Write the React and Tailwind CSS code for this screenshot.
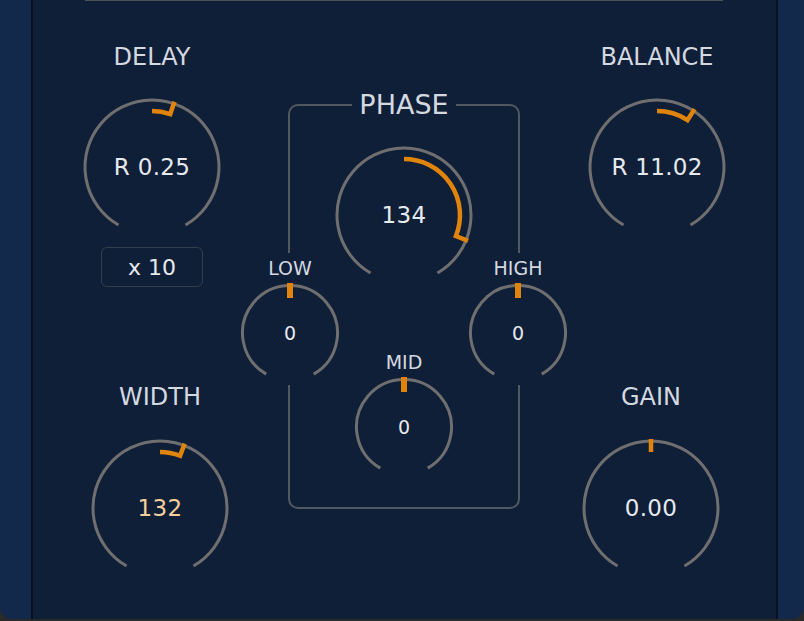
import React from "react";

const ORANGE = "#e0840c";

function pt(c, r, deg) {
  const a = (deg * Math.PI) / 180;
  return [c + r * Math.sin(a), c - r * Math.cos(a)];
}

// gray 300° track + orange value arc with a radial tick at the end
function Dial({ size, r, inner, outer, value, mark }) {
  const c = size / 2;
  const [sx, sy] = pt(c, r, -150);
  const [ex, ey] = pt(c, r, 150);
  const [ix, iy] = pt(c, inner, 0);
  const [jx, jy] = pt(c, inner, value);
  const [ox, oy] = pt(c, outer, value);
  const arc =
    value === 0
      ? ""
      : `A ${inner} ${inner} 0 0 ${value > 0 ? 1 : 0} ${jx} ${jy}`;
  return (
    <svg width={size} height={size} viewBox={`0 0 ${size} ${size}`}>
      <path
        d={`M ${sx} ${sy} A ${r} ${r} 0 1 1 ${ex} ${ey}`}
        fill="none"
        stroke="#6f6f6f"
        strokeWidth={3}
      />
      <path
        d={`M ${ix} ${iy} ${arc} L ${ox} ${oy}`}
        fill="none"
        stroke={ORANGE}
        strokeWidth={mark}
        strokeLinejoin="miter"
      />
    </svg>
  );
}

function BigKnob({ value, angle, valueClass = "text-[#e6eaee]" }) {
  return (
    <div className="relative w-[142px] h-[142px]">
      <Dial size={142} r={67} inner={56} outer={69} value={angle} mark={4.5} />
      <div
        className={`absolute inset-0 flex items-center justify-center text-[23px] tracking-[0.3px] ${valueClass}`}
      >
        {value}
      </div>
    </div>
  );
}

function SmallKnob({ label, bg = "" }) {
  return (
    <div className={`w-[100px] flex flex-col items-center pt-[5px] pb-[2px] ${bg}`}>
      <div className="text-[19px] leading-[20px] text-[#d4d9e0]">{label}</div>
      <div className="relative mt-[5px] w-[100px] h-[100px]">
        <Dial size={100} r={47.5} inner={35} outer={50} value={0} mark={6} />
        <div className="absolute inset-0 flex items-center justify-center text-[19px] text-[#e6eaee]">
          0
        </div>
      </div>
    </div>
  );
}

function Label({ children }) {
  return (
    <div className="w-[142px] text-center text-[24px] leading-[28px] text-[#d4d9e0]">
      {children}
    </div>
  );
}

export default function App() {
  return (
    <div className="w-[804px] h-[621px] bg-[#2a2a2a] font-['DejaVu_Sans',sans-serif]">
      <div className="flex h-[619px] rounded-b-[12px] bg-[#13294b] overflow-hidden">
        <div className="w-[31px]" />
        <div className="w-[2px] bg-[#08111f]" />

        <div className="w-[743px] bg-[#101f38] flex flex-col">
          <div className="ml-[52px] w-[638px] h-px bg-[#4d525a]" />

          <div className="flex items-start">
            {/* left column */}
            <div className="w-[255px] flex flex-col">
              <div className="ml-[48px] mt-[42px] w-[142px] flex flex-col items-center">
                <Label>DELAY</Label>
                <div className="mt-[25px]">
                  <BigKnob value="R 0.25" angle={19} />
                </div>
                <div className="mt-[9px] w-[102px] h-[40px] rounded-[6px] border-[1.5px] border-[#343e4e] flex items-center justify-center text-[22px] text-[#e6eaee]">
                  x 10
                </div>
              </div>
              <div className="ml-[56px] mt-[96px] w-[142px] flex flex-col items-center">
                <Label>WIDTH</Label>
                <div className="mt-[26px]">
                  <BigKnob value="132" angle={21} valueClass="text-[#f3d09a]" />
                </div>
              </div>
            </div>

            {/* phase section */}
            <fieldset className="mt-[90px] w-[232px] border-2 border-[#525860] rounded-[10px] pb-[28px]">
              <legend className="mx-auto px-[7px] text-[27px] leading-[28px] text-[#d4d9e0]">
                PHASE
              </legend>
              <div className="mt-[25px] flex justify-center">
                <BigKnob value="134" angle={112} />
              </div>
              <div className="-mt-[33px] -mx-[50px] flex justify-between items-start">
                <SmallKnob label="LOW" bg="bg-[#101f38]" />
                <div className="mt-[94px]">
                  <SmallKnob label="MID" />
                </div>
                <SmallKnob label="HIGH" bg="bg-[#101f38]" />
              </div>
            </fieldset>

            {/* right column */}
            <div className="w-[256px] flex flex-col">
              <div className="ml-[66px] mt-[42px] w-[142px] flex flex-col items-center">
                <Label>BALANCE</Label>
                <div className="mt-[25px]">
                  <BigKnob value="R 11.02" angle={33} />
                </div>
              </div>
              <div className="ml-[60px] mt-[145px] w-[142px] flex flex-col items-center">
                <Label>GAIN</Label>
                <div className="mt-[26px]">
                  <BigKnob value="0.00" angle={0} />
                </div>
              </div>
            </div>
          </div>
        </div>

        <div className="w-[2px] bg-[#08111f]" />
        <div className="flex-1" />
      </div>
    </div>
  );
}
